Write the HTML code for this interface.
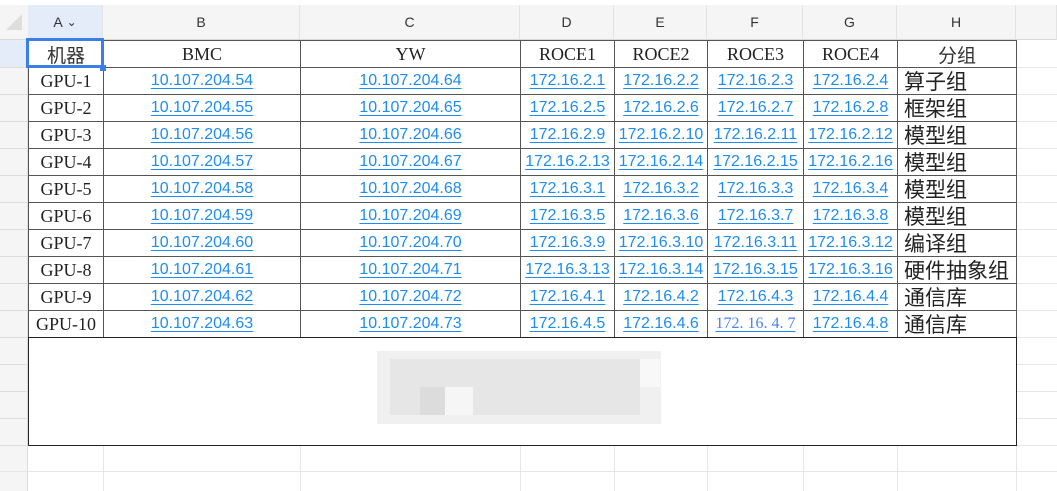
<!DOCTYPE html><html><head><meta charset="utf-8"><style>
body{margin:0;width:1057px;height:491px;overflow:hidden;background:#fff;position:relative;font-family:"Liberation Serif","Noto Serif CJK SC",serif}
.a{position:absolute}
.ch{position:absolute;top:5px;height:35px;background:#f5f5f5;border-right:1px solid #e3e3e3;border-bottom:1px solid #d8d8d8;box-sizing:border-box;font:14px "Liberation Sans",sans-serif;color:#333;display:flex;align-items:center;justify-content:center}
.vl{position:absolute;width:1px;background:#e6e6e6}
.hl{position:absolute;height:1px;background:#e6e6e6}
.c{position:absolute;box-sizing:border-box;display:flex;align-items:center;justify-content:center;font-size:18px;color:#222;white-space:nowrap;overflow:visible}
.l{color:#1e8cf0;text-decoration:underline;font-family:"Liberation Sans",sans-serif;font-size:16px;text-underline-offset:3px}
.g{justify-content:flex-start;padding-left:6px;font-family:"Liberation Sans","Noto Sans CJK SC",sans-serif;font-size:21px}
.gc{font-family:"Liberation Sans","Noto Sans CJK SC",sans-serif;font-size:19px;color:#333}
</style></head><body>
<div class="a" style="left:0;top:5px;width:28px;height:35px;background:#f5f5f5;border-bottom:1px solid #d8d8d8;box-sizing:border-box"></div>
<div class="a" style="left:6px;top:14px;width:0;height:0;border-left:16px solid transparent;border-bottom:16px solid #ddd"></div>
<div class="a" style="left:0;top:40px;width:28px;height:451px;background:#f5f5f5;border-right:1px solid #ddd;box-sizing:border-box"></div>
<div class="a" style="left:0;top:40px;width:28px;height:27px;background:#e4ecfa"></div>
<div class="ch" style="left:28px;width:75px;background:#e4ecfa">A&nbsp;<span style="font-size:12px">&#8964;</span></div>
<div class="ch" style="left:103px;width:197px">B</div>
<div class="ch" style="left:300px;width:220px">C</div>
<div class="ch" style="left:520px;width:94px">D</div>
<div class="ch" style="left:614px;width:93px">E</div>
<div class="ch" style="left:707px;width:96px">F</div>
<div class="ch" style="left:803px;width:94px">G</div>
<div class="ch" style="left:897px;width:119px">H</div>
<div class="ch" style="left:1016px;width:41px"></div>
<div id="gl"></div>
<div class="hl" style="left:0;top:471px;width:1057px"></div>
<div class="vl" style="left:103px;top:446px;height:45px"></div>
<div class="vl" style="left:300px;top:446px;height:45px"></div>
<div class="vl" style="left:520px;top:446px;height:45px"></div>
<div class="vl" style="left:614px;top:446px;height:45px"></div>
<div class="vl" style="left:707px;top:446px;height:45px"></div>
<div class="vl" style="left:803px;top:446px;height:45px"></div>
<div class="vl" style="left:897px;top:446px;height:45px"></div>
<div class="vl" style="left:1016px;top:446px;height:45px"></div>
<div id="t"></div>
<div class="a" style="left:28px;top:337px;width:989px;height:109px;border:1px solid #222;border-top:1.5px solid #222;box-sizing:border-box"></div>
<div class="a" style="left:377px;top:351px;width:284px;height:73px;background:#f0f0f0"></div>
<div class="a" style="left:390px;top:359px;width:250px;height:56px;background:#e6e6e6"></div>
<div class="a" style="left:420px;top:387px;width:25px;height:28px;background:#dcdcdc"></div>
<div class="a" style="left:445px;top:387px;width:28px;height:28px;background:#f6f6f6"></div>
<div class="a" style="left:640px;top:359px;width:20px;height:28px;background:#f8f8f8"></div>
<script>
var g='';for(var y=67;y<=445;y+=27){g+='<div class="hl" style="left:0;top:'+y+'px;width:28px;background:#ddd"></div><div class="hl" style="left:1016px;top:'+y+'px;width:41px"></div>';}
document.getElementById('gl').innerHTML=g;
var cols=[28,103,300,520,614,707,803,897,1016];
var hdr=["机器","BMC","YW","ROCE1","ROCE2","ROCE3","ROCE4","分组"];
var grp=["算子组","框架组","模型组","模型组","模型组","模型组","编译组","硬件抽象组","通信库","通信库"];
var h='';
function cell(x1,x2,y,ht,txt,cls){h+='<div class="c '+(cls||'')+'" style="left:'+x1+'px;top:'+y+'px;width:'+(x2-x1+1)+'px;height:'+(ht+1)+'px;border:1px solid #555;">'+txt+'</div>';}
for(var c=0;c<8;c++)cell(cols[c],cols[c+1],40,27,hdr[c],(c==0||c==7)?'gc':'');
for(var r=0;r<10;r++){var y=67+r*27;
 cell(28,103,y,27,'GPU-'+(r+1));
 cell(103,300,y,27,'<span class="l">10.107.204.'+(54+r)+'</span>');
 cell(300,520,y,27,'<span class="l">10.107.204.'+(64+r)+'</span>');
 for(var k=0;k<4;k++){var n=r*4+k;var sub=2+Math.floor(n/16);var last=(n%16)+1;
  var t='172.16.'+sub+'.'+last;
  if(r==9&&k==2)t='<span style="font-family:\'Liberation Serif\',serif;font-size:16px;color:#4a82f0">172. 16. 4. 7</span>';
  cell(cols[3+k],cols[4+k],y,27,'<span class="l">'+t+'</span>');}
 cell(897,1016,y,27,grp[r],'g');}
document.getElementById('t').innerHTML=h;
</script>
<div class="a" style="left:26px;top:38px;width:78px;height:30px;border:3px solid #3a7ee8;box-sizing:border-box"></div>
<div class="a" style="left:100px;top:65px;width:6px;height:6px;background:#3a7ee8"></div>
</body></html>
